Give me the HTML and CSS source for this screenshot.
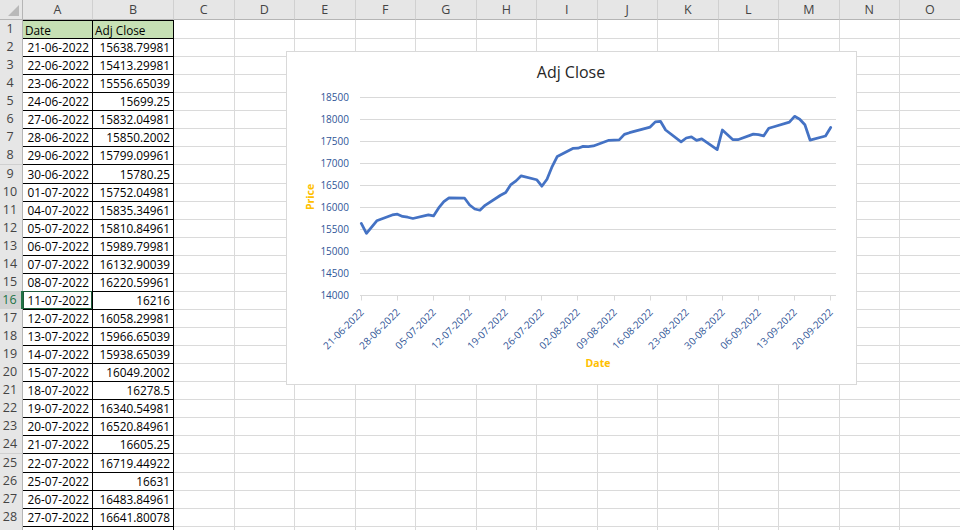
FILE: index.html
```html
<!DOCTYPE html>
<html>
<head>
<meta charset="utf-8">
<link rel="stylesheet" href="styles.css">
</head>
<body>
<div class="sheet">
  <div class="colhdr">
    <div class="corner"><span class="tri"></span></div>
    <div class="ch">A</div><div class="ch">B</div><div class="ch">C</div><div class="ch">D</div><div class="ch">E</div><div class="ch">F</div><div class="ch">G</div><div class="ch">H</div><div class="ch">I</div><div class="ch">J</div><div class="ch">K</div><div class="ch">L</div><div class="ch">M</div><div class="ch">N</div><div class="ch">O</div>
  </div>
  <div class="row"><div class="rh">1</div><div class="c t a hd first">Date</div><div class="c t b hd first">Adj Close</div><div class="fill"></div></div>
  <div class="row"><div class="rh">2</div><div class="c t a">21-06-2022</div><div class="c t b">15638.79981</div><div class="fill"></div></div>
  <div class="row"><div class="rh">3</div><div class="c t a">22-06-2022</div><div class="c t b">15413.29981</div><div class="fill"></div></div>
  <div class="row"><div class="rh">4</div><div class="c t a">23-06-2022</div><div class="c t b">15556.65039</div><div class="fill"></div></div>
  <div class="row"><div class="rh">5</div><div class="c t a">24-06-2022</div><div class="c t b">15699.25</div><div class="fill"></div></div>
  <div class="row"><div class="rh">6</div><div class="c t a">27-06-2022</div><div class="c t b">15832.04981</div><div class="fill"></div></div>
  <div class="row"><div class="rh">7</div><div class="c t a">28-06-2022</div><div class="c t b">15850.2002</div><div class="fill"></div></div>
  <div class="row"><div class="rh">8</div><div class="c t a">29-06-2022</div><div class="c t b">15799.09961</div><div class="fill"></div></div>
  <div class="row"><div class="rh">9</div><div class="c t a">30-06-2022</div><div class="c t b">15780.25</div><div class="fill"></div></div>
  <div class="row"><div class="rh">10</div><div class="c t a">01-07-2022</div><div class="c t b">15752.04981</div><div class="fill"></div></div>
  <div class="row"><div class="rh">11</div><div class="c t a">04-07-2022</div><div class="c t b">15835.34961</div><div class="fill"></div></div>
  <div class="row"><div class="rh">12</div><div class="c t a">05-07-2022</div><div class="c t b">15810.84961</div><div class="fill"></div></div>
  <div class="row"><div class="rh">13</div><div class="c t a">06-07-2022</div><div class="c t b">15989.79981</div><div class="fill"></div></div>
  <div class="row"><div class="rh">14</div><div class="c t a">07-07-2022</div><div class="c t b">16132.90039</div><div class="fill"></div></div>
  <div class="row"><div class="rh">15</div><div class="c t a">08-07-2022</div><div class="c t b">16220.59961</div><div class="fill"></div></div>
  <div class="row"><div class="rh sel">16</div><div class="c t a active">11-07-2022</div><div class="c t b">16216</div><div class="fill"></div></div>
  <div class="row"><div class="rh">17</div><div class="c t a">12-07-2022</div><div class="c t b">16058.29981</div><div class="fill"></div></div>
  <div class="row"><div class="rh">18</div><div class="c t a">13-07-2022</div><div class="c t b">15966.65039</div><div class="fill"></div></div>
  <div class="row"><div class="rh">19</div><div class="c t a">14-07-2022</div><div class="c t b">15938.65039</div><div class="fill"></div></div>
  <div class="row"><div class="rh">20</div><div class="c t a">15-07-2022</div><div class="c t b">16049.2002</div><div class="fill"></div></div>
  <div class="row"><div class="rh">21</div><div class="c t a">18-07-2022</div><div class="c t b">16278.5</div><div class="fill"></div></div>
  <div class="row"><div class="rh">22</div><div class="c t a">19-07-2022</div><div class="c t b">16340.54981</div><div class="fill"></div></div>
  <div class="row"><div class="rh">23</div><div class="c t a">20-07-2022</div><div class="c t b">16520.84961</div><div class="fill"></div></div>
  <div class="row"><div class="rh">24</div><div class="c t a">21-07-2022</div><div class="c t b">16605.25</div><div class="fill"></div></div>
  <div class="row"><div class="rh">25</div><div class="c t a">22-07-2022</div><div class="c t b">16719.44922</div><div class="fill"></div></div>
  <div class="row"><div class="rh">26</div><div class="c t a">25-07-2022</div><div class="c t b">16631</div><div class="fill"></div></div>
  <div class="row"><div class="rh">27</div><div class="c t a">26-07-2022</div><div class="c t b">16483.84961</div><div class="fill"></div></div>
  <div class="row"><div class="rh">28</div><div class="c t a">27-07-2022</div><div class="c t b">16641.80078</div><div class="fill"></div></div>
  <div class="row"><div class="rh"></div><div class="c t a"></div><div class="c t b"></div><div class="fill"></div></div>

  <div class="chart">
    <svg class="plot" width="569" height="332" viewBox="287 52 569 332">
      <text class="title" x="571" y="77.5">Adj Close</text>
      <g class="grid">
        <line x1="360" y1="97.5" x2="836" y2="97.5"/>
        <line x1="360" y1="119.5" x2="836" y2="119.5"/>
        <line x1="360" y1="141.5" x2="836" y2="141.5"/>
        <line x1="360" y1="163.5" x2="836" y2="163.5"/>
        <line x1="360" y1="185.5" x2="836" y2="185.5"/>
        <line x1="360" y1="207.5" x2="836" y2="207.5"/>
        <line x1="360" y1="229.5" x2="836" y2="229.5"/>
        <line x1="360" y1="251.5" x2="836" y2="251.5"/>
        <line x1="360" y1="273.5" x2="836" y2="273.5"/>
        <line x1="360" y1="295.5" x2="836" y2="295.5"/>
      </g>
      <g class="ticks">
        <line x1="361.5" y1="295.5" x2="361.5" y2="300.5"/>
        <line x1="397.5" y1="295.5" x2="397.5" y2="300.5"/>
        <line x1="433.5" y1="295.5" x2="433.5" y2="300.5"/>
        <line x1="469.5" y1="295.5" x2="469.5" y2="300.5"/>
        <line x1="505.5" y1="295.5" x2="505.5" y2="300.5"/>
        <line x1="541.5" y1="295.5" x2="541.5" y2="300.5"/>
        <line x1="577.5" y1="295.5" x2="577.5" y2="300.5"/>
        <line x1="614.5" y1="295.5" x2="614.5" y2="300.5"/>
        <line x1="650.5" y1="295.5" x2="650.5" y2="300.5"/>
        <line x1="686.5" y1="295.5" x2="686.5" y2="300.5"/>
        <line x1="722.5" y1="295.5" x2="722.5" y2="300.5"/>
        <line x1="758.5" y1="295.5" x2="758.5" y2="300.5"/>
        <line x1="794.5" y1="295.5" x2="794.5" y2="300.5"/>
        <line x1="830.5" y1="295.5" x2="830.5" y2="300.5"/>
      </g>
      <g class="ylab">
        <text x="349" y="101">18500</text>
        <text x="349" y="123">18000</text>
        <text x="349" y="145">17500</text>
        <text x="349" y="167">17000</text>
        <text x="349" y="189">16500</text>
        <text x="349" y="211">16000</text>
        <text x="349" y="233">15500</text>
        <text x="349" y="255">15000</text>
        <text x="349" y="277">14500</text>
        <text x="349" y="299">14000</text>
      </g>
      <g class="xlab">
        <text transform="translate(364.5,313) rotate(-45)">21-06-2022</text>
        <text transform="translate(400.5,313) rotate(-45)">28-06-2022</text>
        <text transform="translate(436.5,313) rotate(-45)">05-07-2022</text>
        <text transform="translate(472.5,313) rotate(-45)">12-07-2022</text>
        <text transform="translate(508.5,313) rotate(-45)">19-07-2022</text>
        <text transform="translate(544.5,313) rotate(-45)">26-07-2022</text>
        <text transform="translate(580.5,313) rotate(-45)">02-08-2022</text>
        <text transform="translate(617.5,313) rotate(-45)">09-08-2022</text>
        <text transform="translate(653.5,313) rotate(-45)">16-08-2022</text>
        <text transform="translate(689.5,313) rotate(-45)">23-08-2022</text>
        <text transform="translate(725.5,313) rotate(-45)">30-08-2022</text>
        <text transform="translate(761.5,313) rotate(-45)">06-09-2022</text>
        <text transform="translate(797.5,313) rotate(-45)">13-09-2022</text>
        <text transform="translate(833.5,313) rotate(-45)">20-09-2022</text>
      </g>
      <text class="axt" transform="translate(313.5,197) rotate(-90)">Price</text>
      <text class="axt" x="598" y="367">Date</text>
      <path class="series" d="M361.3,223.46 L366.46,233.40 L371.62,227.08 L376.77,220.80 L392.25,214.94 L397.41,214.14 L402.56,216.40 L407.72,217.23 L412.88,218.47 L428.35,214.80 L433.51,215.88 L438.67,207.99 L443.83,201.68 L448.99,197.82 L464.46,198.02 L469.62,204.97 L474.78,209.01 L479.93,210.24 L485.09,205.37 L500.57,195.26 L505.72,192.53 L510.88,184.58 L516.04,180.86 L521.20,175.83 L536.67,179.73 L541.83,186.21 L546.99,179.25 L552.15,166.56 L557.30,156.48 L572.78,148.47 L577.94,148.23 L583.09,146.35 L588.25,146.62 L593.41,145.94 L608.88,140.31 L619.20,139.89 L624.36,134.41 L629.52,132.69 L650.15,127.08 L655.31,121.84 L660.46,121.30 L665.62,130.03 L681.10,141.83 L686.25,138.00 L691.41,136.79 L696.57,140.43 L701.73,138.82 L717.20,149.67 L722.36,129.99 L732.68,139.53 L737.83,139.68 L753.31,134.11 L758.47,134.56 L763.62,135.94 L768.78,128.25 L773.94,126.73 L789.41,122.18 L794.57,116.29 L799.73,119.21 L804.89,124.78 L810.05,140.06 L825.52,136.03 L830.68,127.48"/>
    </svg>
  </div>
</div>
</body>
</html>
```

FILE: styles.css
```css
html, body {
  margin: 0;
  padding: 0;
  background: #ffffff;
}

.sheet {
  position: relative;
  width: 960px;
  height: 530px;
  overflow: hidden;
  font-family: "Open Sans", "Liberation Sans", sans-serif;
  color: #000;
}

.colhdr {
  display: grid;
  grid-template-columns: 23px 70px 81px repeat(13, 60.5px);
  height: 20px;
}

.corner,
.ch {
  box-sizing: border-box;
  background: #e6e6e6;
  border-right: 1px solid #d0d0d0;
  border-bottom: 1px solid #b5b5b5;
}

.corner {
  position: relative;
  border-right-color: #b5b5b5;
}

.tri {
  position: absolute;
  right: 3px;
  bottom: 3px;
  width: 11px;
  height: 11px;
  background: #b9b9b9;
  clip-path: polygon(100% 0, 100% 100%, 0 100%);
}

.ch {
  font-size: 12.5px;
  line-height: 19px;
  text-align: center;
  color: #444;
}

.row {
  display: grid;
  grid-template-columns: 23px 70px 81px 1fr;
  height: 18.07px;
}

.rh {
  box-sizing: border-box;
  background: #e6e6e6;
  border-right: 1px solid #b5b5b5;
  border-bottom: 1px solid #d0d0d0;
  font-size: 12.5px;
  line-height: 18px;
  text-align: center;
  padding-right: 2px;
  color: #444;
}

.rh.sel {
  background: #d2d2d2;
  color: #217346;
  border-right: 2px solid #217346;
}

.c {
  box-sizing: border-box;
  font-size: 11.8px;
  line-height: 17px;
  padding-top: 1px;
  white-space: nowrap;
  overflow: hidden;
}

.t {
  border-right: 1px solid #000;
  border-bottom: 1px solid #000;
}

.a {
  text-align: right;
  padding-right: 3px;
}

.b {
  text-align: right;
  padding-right: 3px;
}

.hd {
  background: #c6e0b4;
  text-align: left;
  padding-left: 2px;
}

.first {
  border-top: 1px solid #000;
  line-height: 16px;
}

.active {
  box-shadow: inset 0 0 0 1px #1f5c3a;
}

.fill {
  box-sizing: border-box;
  border-bottom: 1px solid #dadada;
  background: repeating-linear-gradient(to right, transparent 0, transparent 59.5px, #dadada 59.5px, #dadada 60.5px);
}

.chart {
  position: absolute;
  left: 286px;
  top: 51px;
  width: 571px;
  height: 334px;
  box-sizing: border-box;
  background: #fff;
  border: 1px solid #d9d9d9;
}

.plot {
  display: block;
  font-family: "Open Sans", "Liberation Sans", sans-serif;
}

.title {
  font-size: 16px;
  fill: #262626;
  text-anchor: middle;
}

.grid line,
.ticks line {
  stroke: #d9d9d9;
  stroke-width: 1;
}

.ylab text {
  font-size: 10px;
  fill: #2f5597;
  text-anchor: end;
}

.xlab text {
  font-size: 10px;
  fill: #2f5597;
  text-anchor: end;
}

.axt {
  font-size: 10.5px;
  font-weight: bold;
  fill: #ffc000;
  text-anchor: middle;
}

.series {
  fill: none;
  stroke: #4472c4;
  stroke-width: 2.75;
  stroke-linejoin: round;
  stroke-linecap: round;
}
```
